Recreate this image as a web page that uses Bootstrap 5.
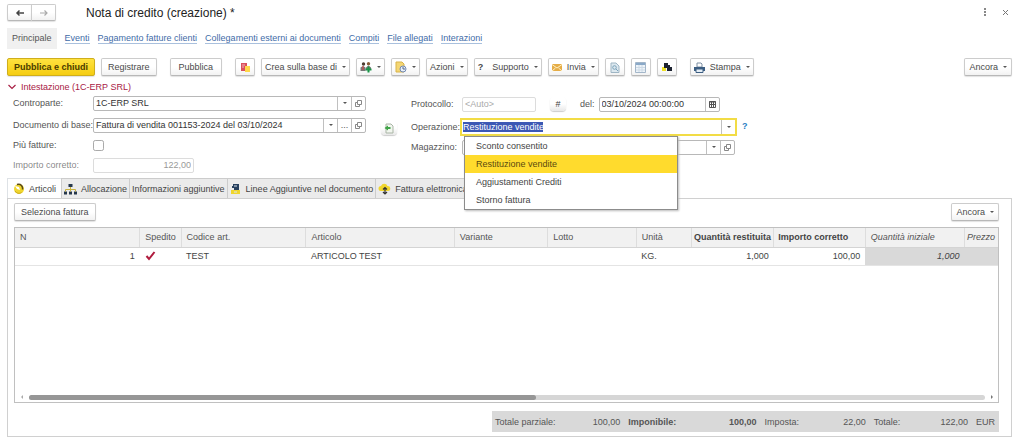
<!DOCTYPE html>
<html lang="it">
<head>
<meta charset="utf-8">
<meta name="viewport" content="width=device-width, initial-scale=1">
<title>Nota di credito (creazione)</title>
<link href="https://cdn.jsdelivr.net/npm/bootstrap@5.3.0/dist/css/bootstrap.min.css" rel="stylesheet">
<style>
  body { font: 9px/12px "Liberation Sans", Arial, sans-serif; color: #444; padding: 4px 12px 2px 7px; }
  svg { display: block; flex: none; }
  button, input { font: inherit; color: inherit; }
  .doc-title { font-size: 12px; line-height: 16px; color: #222; margin: 0 0 0 30px; font-weight: 400; }
  .win-tool { border: 0; background: none; padding: 0; color: #666; }
  .btn { --bs-btn-font-size: 9px; --bs-btn-line-height: 12px; --bs-btn-padding-y: 2px; --bs-btn-padding-x: 6px;
    --bs-btn-color: #4a4a4a; --bs-btn-bg: #fff; --bs-btn-border-color: #cccccc; --bs-btn-border-radius: 2px;
    --bs-btn-hover-bg: #f4f4f4; --bs-btn-hover-border-color: #aaa;
    height: 18px; display: inline-flex; align-items: center; justify-content: center; gap: 5px; white-space: nowrap;
    border-bottom-color: #b8b8b8; box-shadow: 0 1px 1px #e2e2e2; background-image: linear-gradient(#fff 50%, #f2f2f2); }
  .btn.caret { --bs-btn-padding-x: 3px; }
  .btn-main { --bs-btn-color: #4a3c00; font-weight: 700; border-color: #cfae1c; background-image: linear-gradient(#ffe23f, #f5cd12); }
  .btn.btn-ico { width: 20px; padding: 0; }
  .btn.btn-ico-drop { width: 29px; padding: 0; }
  .btn-wide { padding: 2px 8px; }
  .caret::after { content: ""; border: 2px solid transparent; border-top-color: #555; border-bottom: 0; }
  .btn-hist { width: 25px; height: 17px; padding: 0; }
  .sections { --bs-nav-link-padding-x: 0; --bs-nav-link-padding-y: 0; gap: 8px; margin-top: 7px; height: 21px; }
  .sections a { color: #3f6ca8; text-decoration: none; line-height: 10px; border-bottom: 1px solid #a9c0dd; }
  .sections a.current { color: #555; background: #f0f0f0; border: 0; line-height: 21px; padding: 0 5px; }
  .toolbar { margin-top: 9px; }
  .gap-btn { gap: 6px; }
  .group-btn { gap: 13px; }
  .group-head { border: 0; background: none; color: #a82045; padding: 0; margin-top: 5px; }
  .form-area { display: grid; grid-template-columns: minmax(0, 353fr) 45px minmax(0, 324fr) minmax(0, 277fr); padding-left: 6px; }
  .line { display: flex; align-items: center; height: 16px; color: #555; }
  .fields-l { display: flex; flex-direction: column; gap: 4px; padding-top: 2px; }
  .fields-r { display: flex; flex-direction: column; gap: 4px; padding-top: 3px; }
  .line-doc { margin-top: 2px; }
  .lbl-l { width: 80px; flex: none; white-space: nowrap; }
  .lbl-r { width: 51px; flex: none; white-space: nowrap; }
  .box { display: flex; flex: 1 1 0; min-width: 0; height: 15px; border: 1px solid #b8b8b8; border-radius: 2px; background: #fff; color: #333; }
  .box input { flex: 1 1 0; min-width: 0; border: 0; padding: 0 2px; background: none; outline: 0; }
  .box input::placeholder { color: #aaa; }
  .box button { width: 14px; flex: none; border: 0; border-left: 1px solid #c0c0c0; background: none; padding: 0; display: flex; align-items: center; justify-content: center; line-height: 8px; color: #555; }
  .box.off { border-color: #dcdcdc; color: #999; }
  .box.active { height: 18px; border: 2px solid #f2dc45; margin: 0 -2px; border-radius: 0; }
  .box.active input { flex: none; width: 81px; margin: 2px auto 2px 0; line-height: 10px; height: 10px; padding: 0 0 0 1px; }
  .box.active input::selection { background: #3c58b4; color: #fff; }
  .amount { flex: 0 0 101px; }
  .w-auto-no { flex: 0 0 74px; }
  .w-date { flex: 0 0 121px; }
  .form-check-input { width: 11px; height: 11px; margin: 0; border-radius: 1px; border-color: #aaa; }
  .round-btn { border: 0; padding: 0; background: linear-gradient(#fff 50%, #e8e8e8); box-shadow: 0 1px 1px #ccc; border-radius: 4px; width: 16px; height: 14px; display: flex; align-items: center; justify-content: center; color: #444; }
  .num-btn { margin: 0 14px; }
  .help-cell { padding: 27px 0 0 7px; }
  .help-link { color: #2a7fc4; text-decoration: none; font-weight: 700; }
  .pick-wrap { position: relative; margin-top: 3px; }
  .dropdown-menu { --bs-dropdown-min-width: 0; --bs-dropdown-font-size: 9px; --bs-dropdown-padding-y: 0; --bs-dropdown-padding-x: 0;
    --bs-dropdown-border-radius: 0; --bs-dropdown-border-color: #8c8c8c; --bs-dropdown-item-padding-x: 11px; --bs-dropdown-item-padding-y: 3px;
    --bs-dropdown-link-color: #444; --bs-dropdown-link-active-bg: #ffdb2d; --bs-dropdown-link-active-color: #5a4a10;
    top: 17px; left: 53px; right: 57px; box-shadow: 1px 1px 2px #bbb; }
  .dropdown-item { line-height: 12px; }
  .nav-tabs { --bs-nav-tabs-border-width: 0; --bs-nav-link-padding-x: 2px; --bs-nav-link-padding-y: 0; margin-top: 5px; }
  .nav-tabs .nav-link { display: flex; align-items: center; gap: 4px; height: 21px; margin: 0; border: 1px solid #ccc; border-right: 0; border-radius: 0; background: #ebebeb; color: #444; white-space: nowrap; }
  .nav-tabs .nav-link.active { background: #fff; border-bottom-color: #fff; color: #444; padding: 0 5px; }
  .nav-tabs li:last-child .nav-link { border-right: 1px solid #ccc; }
  .sheet { border: 1px solid #d0d0d0; margin-top: -1px; padding: 4px 12px 4px 6px; }
  .grid-box { border: 1px solid #c0c0c0; margin-top: 6px; }
  .items { table-layout: fixed; margin: 0; width: 100%; }
  .items th, .items td { height: 18px; padding: 2px 5px; font-weight: 400; white-space: nowrap; overflow: hidden; vertical-align: middle; border-bottom: 1px solid #e4e4e4; }
  .items thead th { height: 19px; background: #f1f1f1; color: #555; border-bottom-color: #d4d4d4; border-right: 1px solid #ddd; }
  .items thead th:last-child { border-right: 0; padding: 2px; }
  .items thead th.strong { font-weight: 700; color: #444; padding: 2px; }
  .items .dim { font-style: italic; }
  .items td.dim { background: #d9d9d9; }
  .scroll-row { height: 8px; padding: 0 5px 0 6px; gap: 6px; margin-bottom: 1px; }
  .track { flex: 1; height: 5px; border-radius: 3px; background: #d6d6d6; }
  .thumb { height: 5px; border-radius: 3px; background: #969696; width: 53%; }
  .arrow-l { border: 2px solid transparent; border-right-color: #aaa; border-left: 0; }
  .arrow-r { border: 2px solid transparent; border-left-color: #777; border-right: 0; }
  .totals-line { display: grid; grid-template-columns: 478fr 507fr; margin-top: 8px; }
  .totals { grid-column: 2; display: grid; grid-template-columns: 133fr 136fr 109fr 102fr 20fr; height: 21px; padding: 0 3px; background: #d9d9d9; align-items: center; color: #555; }
  .totals div { display: flex; justify-content: space-between; padding-right: 8px; white-space: nowrap; }
  .totals div:last-child { padding: 0; }
</style>
</head>
<body class="d-flex flex-column min-vh-100">
<svg width="0" height="0" class="position-absolute" aria-hidden="true">
  <symbol id="open" viewBox="0 0 9 9"><path d="M3.500 1.500h4v4h-4zM3.500 3.500h-2v4h4v-2" fill="none" stroke="#888"/></symbol>
</svg>

<header class="d-flex align-items-center">
  <div class="btn-group">
    <button class="btn btn-hist" aria-label="Indietro"><svg width="10" height="8"><path d="M9 4H2M4.500 1.500 2 4l2.500 2.500" fill="none" stroke="#444" stroke-width="1.500"/></svg></button>
    <button class="btn btn-hist" aria-label="Avanti"><svg width="10" height="8"><path d="M1 4h7M5.500 1.500 8 4 5.500 6.500" fill="none" stroke="#aaa" stroke-width="1.200"/></svg></button>
  </div>
  <h1 class="doc-title">Nota di credito (creazione) *</h1>
  <div class="ms-auto d-flex align-items-center gap-3 pe-1">
    <button class="win-tool" aria-label="Altro"><svg width="3" height="9" fill="#888"><path d="M0 0h2v2H0zM0 3h2v2H0zM0 6h2v2H0z"/></svg></button>
    <button class="win-tool" aria-label="Chiudi"><svg width="5" height="5"><path d="M0 0l5 5M5 0 0 5" stroke="#777"/></svg></button>
  </div>
</header>

<nav class="nav sections align-items-center">
  <a class="current" href="#">Principale</a>
  <a href="#">Eventi</a>
  <a href="#">Pagamento fatture clienti</a>
  <a href="#">Collegamenti esterni ai documenti</a>
  <a href="#">Compiti</a>
  <a href="#">File allegati</a>
  <a href="#">Interazioni</a>
</nav>

<div class="toolbar d-flex group-btn">
  <div class="d-flex gap-btn">
    <button class="btn btn-main">Pubblica e chiudi</button>
    <button class="btn">Registrare</button>
  </div>
  <button class="btn btn-wide">Pubblica</button>
  <div class="d-flex gap-btn">
    <button class="btn btn-ico" aria-label="Struttura"><svg width="11" height="11"><path d="M1 1h6v8H1z" fill="#d9505c"/><path d="M2 3h3M2 5h2" stroke="#f4b3b5"/><path d="M5 4h5v6H5z" fill="#ffd84a"/></svg></button>
    <button class="btn caret">Crea sulla base di</button>
    <button class="btn btn-ico-drop caret" aria-label="Partecipanti"><svg width="12" height="12"><circle cx="3.500" cy="3" r="1.700" fill="#4b3c30"/><circle cx="8.500" cy="2.700" r="1.700" fill="#8a5c38"/><path d="M.5 10V6.500L3 5l2.500 1.500V10zM6 6.500 8.500 4.500 11 6.500V9H6z" fill="#777"/><path d="M3 5v4" stroke="#d44"/><path d="M8.500 5.500v6M5.500 8.500h6" stroke="#199447" stroke-width="2"/></svg></button>
    <button class="btn btn-ico-drop caret" aria-label="Promemoria"><svg width="12" height="12"><path d="M1 1h6l2 2v8H1z" fill="#f4d673" stroke="#d8b34b"/><circle cx="8" cy="8" r="3" fill="#e9f0f8" stroke="#7189b3"/><path d="M8 6v2h2" fill="none" stroke="#55698e"/></svg></button>
    <button class="btn caret">Azioni</button>
    <button class="btn caret"><b class="pe-1">?</b>Supporto</button>
    <button class="btn caret"><svg width="10" height="9"><path d="M0 1h10v7H0z" fill="#e5ad48"/><path d="M0 1.500 5 5l5-3.500M0 8l3.500-3M10 8 6.500 5" fill="none" stroke="#fff0c5"/></svg>Invia</button>
    <button class="btn btn-ico" aria-label="Ricerca documento"><svg width="10" height="11"><path d="M1 1h5l3 3v6.500H1z" fill="#dce8ef" stroke="#9eb5c4"/><circle cx="4.500" cy="5.500" r="1.800" fill="none" stroke="#7ba3bb"/><path d="M6 7l2 2" stroke="#7ba3bb"/></svg></button>
    <button class="btn btn-ico" aria-label="Elenco"><svg width="11" height="11"><path d="M.5.5h10v10H.5z" fill="#eef4f9" stroke="#a3b6c9"/><path d="M1 2h9" stroke="#8aa9c8" stroke-width="2"/><path d="M1 5.500h9M1 8h9M4 3v7M7 3v7" stroke="#cddae6"/></svg></button>
    <button class="btn btn-ico" aria-label="Registrazioni"><svg width="12" height="10"><path d="M1 5h4v4H1z" fill="#efe125"/><path d="M3 1h4v2h2v2h2v4H6V6H3z" fill="#1c2230"/></svg></button>
  </div>
  <button class="btn caret"><svg width="11" height="11"><path d="M3 1h4l1 1v3H3z" fill="#fff" stroke="#7d8fa3"/><path d="M0 5h11v4H0z" fill="#3c5e82"/><path d="M2 7h7v3.500H2z" fill="#e4edf5" stroke="#3c5e82"/></svg>Stampa</button>
  <button class="btn caret px-1 ms-auto">Ancora</button>
</div>

<button class="group-head d-flex align-items-center gap-1 align-self-start"><svg width="10" height="8"><path d="M1.500 2 5 5.500 8.500 2" fill="none" stroke="#a82045" stroke-width="1.200"/></svg>Intestazione (1C-ERP SRL)</button>

<form class="form-area" onsubmit="return false">
  <div class="fields-l">
    <div class="line"><label class="lbl-l" for="cp">Controparte:</label>
      <div class="box"><input id="cp" value="1C-ERP SRL"><button class="caret" aria-label="Elenco"></button><button aria-label="Apri"><svg width="9" height="9"><use href="#open"/></svg></button></div></div>
    <div class="line line-doc"><label class="lbl-l" for="doc">Documento di base:</label>
      <div class="box"><input id="doc" value="Fattura di vendita 001153-2024 del 03/10/2024"><button class="caret" aria-label="Elenco"></button><button aria-label="Scegli">...</button><button aria-label="Apri"><svg width="9" height="9"><use href="#open"/></svg></button></div></div>
    <div class="line"><label class="lbl-l" for="pf">Più fatture:</label><input class="form-check-input" type="checkbox" id="pf"></div>
    <div class="line"><label class="lbl-l text-black-50" for="imp">Importo corretto:</label>
      <div class="box off amount"><input id="imp" class="text-end" value="122,00" disabled></div></div>
  </div>
  <div class="d-flex justify-content-center pt-4">
    <button class="round-btn mt-1" aria-label="Compila dal documento"><svg width="11" height="11"><path d="M3 1h5l2 2v7H3z" fill="#f2f6ef" stroke="#a9b5a5"/><path d="M5 2.500 1.500 5 5 7.500V6h2.500V4H5z" fill="#3fa548"/></svg></button>
  </div>
  <div class="fields-r">
    <div class="line"><label class="lbl-r" for="prot">Protocollo:</label>
      <div class="box off w-auto-no"><input id="prot" placeholder="&lt;Auto&gt;"></div>
      <button class="round-btn num-btn" aria-label="Numero">#</button>
      <label class="pe-1" for="dt">del:</label>
      <div class="box w-date"><input id="dt" value="03/10/2024 00:00:00"><button aria-label="Calendario"><svg width="7" height="8"><path d="M.5 1.500h6v6h-6z" fill="#fff" stroke="#555"/><path d="M0 2h7M0 4.500h7M2.500 2v5M4.500 2v5" stroke="#555"/></svg></button></div></div>
    <div class="line pick-wrap"><label class="lbl-r" for="op">Operazione:</label>
      <div class="box active"><input id="op" role="combobox" aria-expanded="true" aria-controls="oplist" value="Restituzione vendite"><button class="caret" aria-label="Elenco"></button></div>
      <ul class="dropdown-menu show" id="oplist">
        <li><a class="dropdown-item" href="#">Sconto consentito</a></li>
        <li><a class="dropdown-item active" href="#">Restituzione vendite</a></li>
        <li><a class="dropdown-item" href="#">Aggiustamenti Crediti</a></li>
        <li><a class="dropdown-item" href="#">Storno fattura</a></li>
      </ul></div>
    <div class="line"><label class="lbl-r" for="mag">Magazzino:</label>
      <div class="box"><input id="mag"><button class="caret" aria-label="Elenco"></button><button aria-label="Apri"><svg width="9" height="9"><use href="#open"/></svg></button></div></div>
  </div>
  <div class="help-cell"><a class="help-link" href="#" aria-label="Aiuto">?</a></div>
</form>

<ul class="nav nav-tabs">
  <li><button class="nav-link active"><svg width="12" height="12"><circle cx="6" cy="6" r="5" fill="#f0d62e"/><path d="M2 3l4 1 1 3-3-1z" fill="#fff"/><path d="M4 1.500c4-1 6 2 5.500 5" fill="none" stroke="#5b4b19" stroke-width="1.500"/><path d="M2 8c2 2.500 4 3 6.500 1.500" fill="none" stroke="#c9a81c"/></svg>Articoli</button></li>
  <li><button class="nav-link"><svg width="13" height="12"><path d="M4.500 1h4v3h-4zM0 8.500h3v3H0zM5 8.500h3v3H5zM10 8.500h3v3h-3z" fill="#26384c"/><path d="M6.500 4v4.500M1.500 8.500v-2h10v2" fill="none" stroke="#c9b23d"/></svg>Allocazione</button></li>
  <li><button class="nav-link">Informazioni aggiuntive</button></li>
  <li><button class="nav-link"><svg width="12" height="12"><path d="M1 7h9v4H1z" fill="#f0d62e"/><path d="M3 1h6v6H4V5H2V3h1z" fill="#27405e"/><path d="M4 3h3M4 9h3" stroke="#dce5ee"/></svg>Linee Aggiuntive nel documento</button></li>
  <li><button class="nav-link"><svg width="13" height="12"><path d="M3 8a2.500 2.500 0 0 1 0-5 3.500 3.500 0 0 1 6.500 0A2.500 2.500 0 0 1 10 8z" fill="#f0d62e"/><path d="M7 4.500v6M5 6.500l2-2 2 2M5 9l2 2 2-2" fill="none" stroke="#333" stroke-width="1.200"/></svg>Fattura elettronica</button></li>
</ul>

<main class="sheet d-flex flex-column flex-grow-1">
  <div class="d-flex justify-content-between">
    <button class="btn">Seleziona fattura</button>
    <button class="btn caret px-1">Ancora</button>
  </div>
  <div class="grid-box d-flex flex-column flex-grow-1">
    <table class="items">
      <colgroup><col style="width:12.7%"><col style="width:4.2%"><col style="width:12.7%"><col style="width:15.1%"><col style="width:9.5%"><col style="width:9%"><col style="width:5.600%"><col style="width:8.400%"><col style="width:9.300%"><col style="width:10.100%"><col></colgroup>
      <thead><tr><th>N</th><th>Spedito</th><th>Codice art.</th><th>Articolo</th><th>Variante</th><th>Lotto</th><th>Unità</th><th class="strong text-center">Quantità restituita</th><th class="strong ps-1">Importo corretto</th><th class="dim">Quantità iniziale</th><th class="dim">Prezzo</th></tr></thead>
      <tbody><tr><td class="text-end">1</td><td><svg width="11" height="10"><path d="M1.500 5 4 8l5.500-7" fill="none" stroke="#b01c3e" stroke-width="2"/></svg></td><td>TEST</td><td>ARTICOLO TEST</td><td></td><td></td><td>KG.</td><td class="text-end">1,000</td><td class="text-end">100,00</td><td class="text-end dim">1,000</td><td class="dim"></td></tr></tbody>
    </table>
    <div class="scroll-row d-flex align-items-center mt-auto"><i class="arrow-l"></i><div class="track"><div class="thumb"></div></div><i class="arrow-r"></i></div>
  </div>
  <div class="totals-line">
    <div class="totals">
      <div><span>Totale parziale:</span><span>100,00</span></div>
      <div class="fw-bold"><span>Imponibile:</span><span>100,00</span></div>
      <div><span>Imposta:</span><span>22,00</span></div>
      <div><span>Totale:</span><span>122,00</span></div>
      <div>EUR</div>
    </div>
  </div>
</main>
<script src="https://cdn.jsdelivr.net/npm/bootstrap@5.3.0/dist/js/bootstrap.bundle.min.js"></script>
<script>document.getElementById('op').select();</script>
</body>
</html>
